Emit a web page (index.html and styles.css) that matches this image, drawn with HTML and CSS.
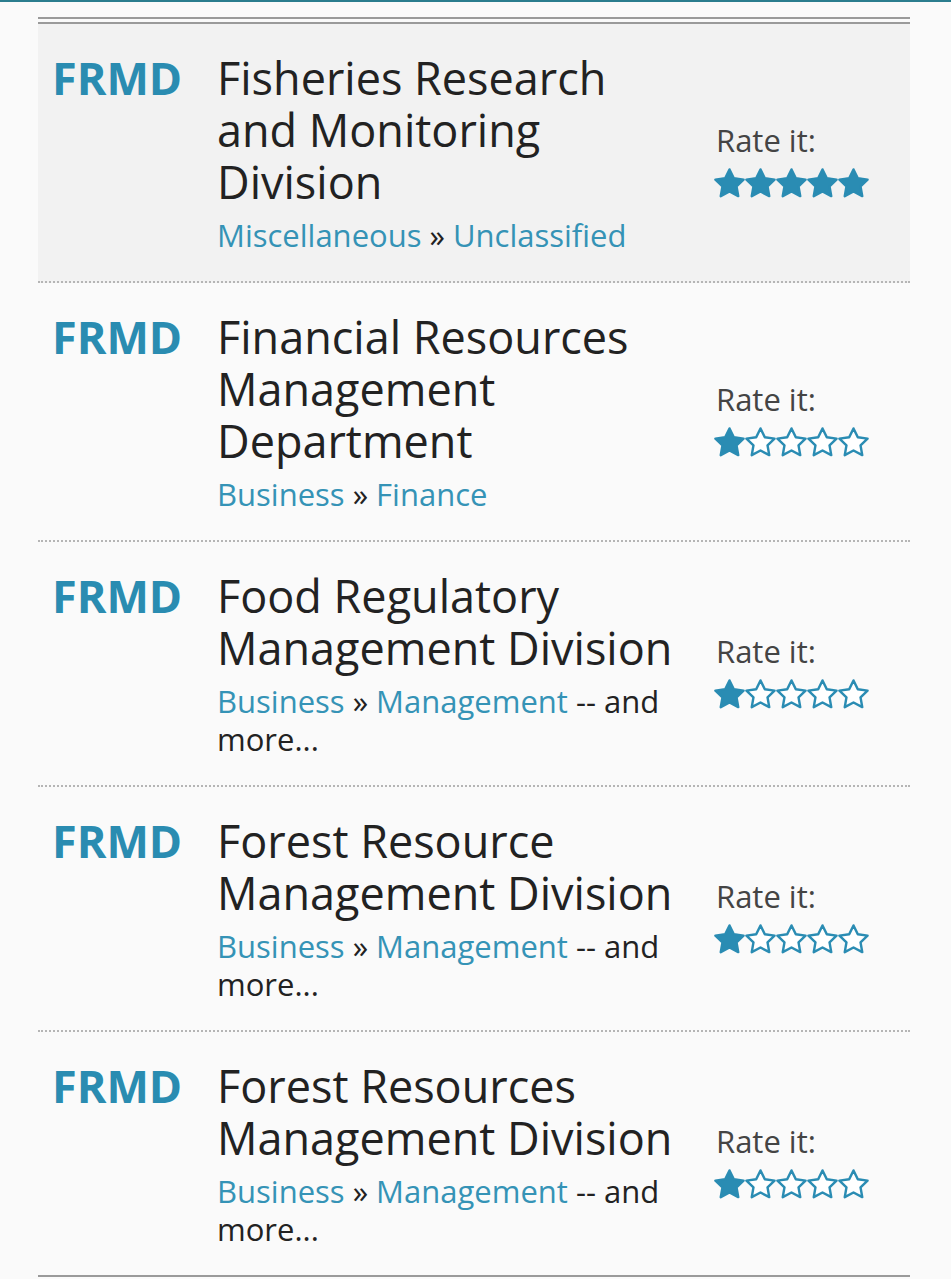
FILE: index.html
```html
<!DOCTYPE html>
<html lang="en">
<head>
  <meta charset="UTF-8">
  <meta name="viewport" content="width=device-width, initial-scale=1.0">
  <title>FRMD definitions</title>
  <link rel="stylesheet" href="styles.css">
</head>
<body>
  <div class="topbar"></div>

  <svg width="0" height="0" class="defs">
    <defs>
      <polygon id="star" points="12,2.2 15,8.4 21.8,9.3 16.9,14 18.1,20.8 12,17.6 5.9,20.8 7.1,14 2.2,9.3 9,8.4"/>
    </defs>
  </svg>

  <div class="list">
    <!-- 1 -->
    <div class="entry highlight">
      <div class="abbr">FRMD</div>
      <div class="info">
        <div class="title">Fisheries Research and Monitoring Division</div>
        <div class="cats"><a href="#">Miscellaneous</a> » <a href="#">Unclassified</a></div>
      </div>
      <div class="rate">
        <div class="rate-label">Rate it:</div>
        <div class="stars">
          <svg class="star on" viewBox="1.2 1.2 21.6 21.6"><use href="#star"/></svg>
          <svg class="star on" viewBox="1.2 1.2 21.6 21.6"><use href="#star"/></svg>
          <svg class="star on" viewBox="1.2 1.2 21.6 21.6"><use href="#star"/></svg>
          <svg class="star on" viewBox="1.2 1.2 21.6 21.6"><use href="#star"/></svg>
          <svg class="star on" viewBox="1.2 1.2 21.6 21.6"><use href="#star"/></svg>
        </div>
      </div>
    </div>

    <!-- 2 -->
    <div class="entry">
      <div class="abbr">FRMD</div>
      <div class="info">
        <div class="title">Financial Resources Management Department</div>
        <div class="cats"><a href="#">Business</a> » <a href="#">Finance</a></div>
      </div>
      <div class="rate">
        <div class="rate-label">Rate it:</div>
        <div class="stars">
          <svg class="star on" viewBox="1.2 1.2 21.6 21.6"><use href="#star"/></svg>
          <svg class="star" viewBox="1.2 1.2 21.6 21.6"><use href="#star"/></svg>
          <svg class="star" viewBox="1.2 1.2 21.6 21.6"><use href="#star"/></svg>
          <svg class="star" viewBox="1.2 1.2 21.6 21.6"><use href="#star"/></svg>
          <svg class="star" viewBox="1.2 1.2 21.6 21.6"><use href="#star"/></svg>
        </div>
      </div>
    </div>

    <!-- 3 -->
    <div class="entry">
      <div class="abbr">FRMD</div>
      <div class="info">
        <div class="title">Food Regulatory Management Division</div>
        <div class="cats"><a href="#">Business</a> » <a href="#">Management</a> -- and more...</div>
      </div>
      <div class="rate">
        <div class="rate-label">Rate it:</div>
        <div class="stars">
          <svg class="star on" viewBox="1.2 1.2 21.6 21.6"><use href="#star"/></svg>
          <svg class="star" viewBox="1.2 1.2 21.6 21.6"><use href="#star"/></svg>
          <svg class="star" viewBox="1.2 1.2 21.6 21.6"><use href="#star"/></svg>
          <svg class="star" viewBox="1.2 1.2 21.6 21.6"><use href="#star"/></svg>
          <svg class="star" viewBox="1.2 1.2 21.6 21.6"><use href="#star"/></svg>
        </div>
      </div>
    </div>

    <!-- 4 -->
    <div class="entry">
      <div class="abbr">FRMD</div>
      <div class="info">
        <div class="title">Forest Resource Management Division</div>
        <div class="cats"><a href="#">Business</a> » <a href="#">Management</a> -- and more...</div>
      </div>
      <div class="rate">
        <div class="rate-label">Rate it:</div>
        <div class="stars">
          <svg class="star on" viewBox="1.2 1.2 21.6 21.6"><use href="#star"/></svg>
          <svg class="star" viewBox="1.2 1.2 21.6 21.6"><use href="#star"/></svg>
          <svg class="star" viewBox="1.2 1.2 21.6 21.6"><use href="#star"/></svg>
          <svg class="star" viewBox="1.2 1.2 21.6 21.6"><use href="#star"/></svg>
          <svg class="star" viewBox="1.2 1.2 21.6 21.6"><use href="#star"/></svg>
        </div>
      </div>
    </div>

    <!-- 5 -->
    <div class="entry">
      <div class="abbr">FRMD</div>
      <div class="info">
        <div class="title">Forest Resources Management Division</div>
        <div class="cats"><a href="#">Business</a> » <a href="#">Management</a> -- and more...</div>
      </div>
      <div class="rate">
        <div class="rate-label">Rate it:</div>
        <div class="stars">
          <svg class="star on" viewBox="1.2 1.2 21.6 21.6"><use href="#star"/></svg>
          <svg class="star" viewBox="1.2 1.2 21.6 21.6"><use href="#star"/></svg>
          <svg class="star" viewBox="1.2 1.2 21.6 21.6"><use href="#star"/></svg>
          <svg class="star" viewBox="1.2 1.2 21.6 21.6"><use href="#star"/></svg>
          <svg class="star" viewBox="1.2 1.2 21.6 21.6"><use href="#star"/></svg>
        </div>
      </div>
    </div>
  </div>
</body>
</html>
```

FILE: styles.css
```css
* {
  margin: 0;
  padding: 0;
  box-sizing: border-box;
}
body {
  background: #fafafa;
  color: #222;
  font-family: "Open Sans", "Noto Sans", sans-serif;
}
.defs {
  position: absolute;
}
.topbar {
  height: 2px;
  background: #2b7d8e;
}
.list {
  margin: 15px 41px 0 38px;
  border-top: 7px double #9a9a9a;
  border-bottom: 2px solid #9a9a9a;
}
.entry {
  display: flex;
  align-items: center;
  padding: 28px 0 27px;
  border-bottom: 2px dotted #b5b5b5;
}
.entry:last-child {
  border-bottom: none;
}
.entry.highlight {
  background: #f2f2f2;
}
.abbr {
  align-self: flex-start;
  width: 179px;
  padding-left: 14px;
  font-size: 45px;
  line-height: 52px;
  font-weight: bold;
  color: #2a8cb1;
}
.info {
  width: 497px;
  padding-right: 32px;
}
.title {
  font-size: 45px;
  line-height: 52px;
  color: #222;
}
.cats {
  margin-top: 8px;
  font-size: 31px;
  line-height: 38px;
  color: #222;
}
.cats a {
  color: #3593b6;
  text-decoration: none;
}
.rate {
  flex: 1;
  padding-top: 13px;
}
.rate-label {
  padding-left: 2px;
  font-size: 31px;
  line-height: 40px;
  color: #444;
}
.stars {
  display: flex;
  margin-top: 8px;
}
.star {
  width: 31px;
  height: 31px;
  fill: #fff;
  stroke: #2a8cb3;
  stroke-width: 1.7;
  stroke-linejoin: round;
}
.star.on {
  fill: #2a8cb3;
}
```
